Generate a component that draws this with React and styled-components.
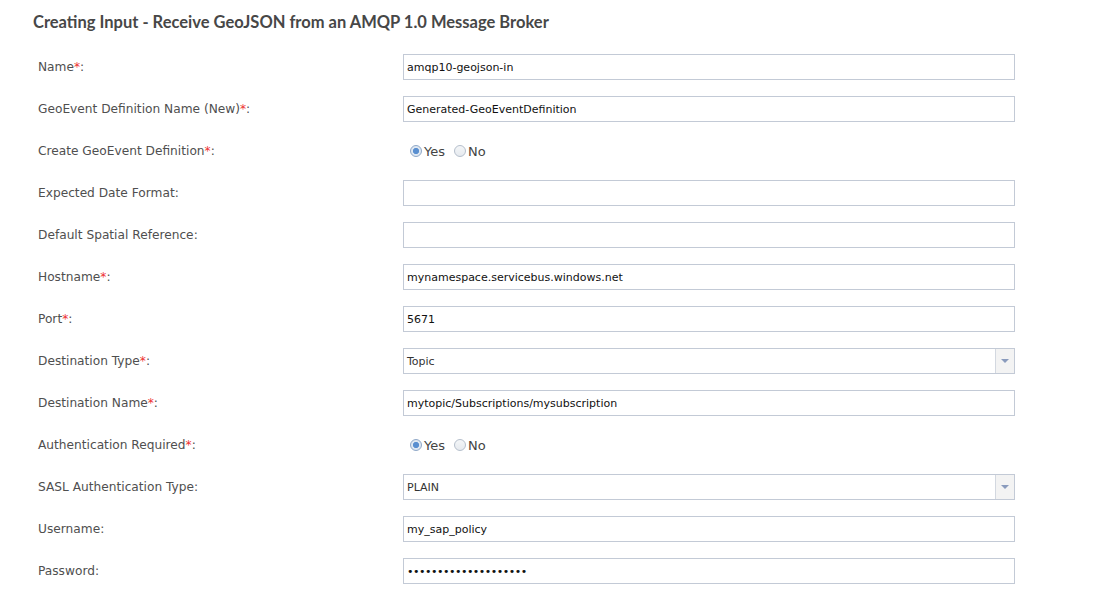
import React from "react";
import styled, { createGlobalStyle } from "styled-components";

const Global = createGlobalStyle`
  html, body { margin: 0; padding: 0; background: #fff; }
  body { font-family: "DejaVu Sans", Verdana, sans-serif; }
`;

const Page = styled.div`
  width: 1094px;
  height: 608px;
  padding: 12px 0 0 33px;
  box-sizing: border-box;
  overflow: hidden;
`;

const Title = styled.h2`
  margin: 0 0 14px 0;
  font-family: Lato, "Open Sans", sans-serif;
  font-weight: 700;
  font-size: 16.5px;
  line-height: 20px;
  color: #474747;
`;

const Form = styled.div`
  display: flex;
  flex-direction: column;
  padding-left: 5px;
`;

const Row = styled.div`
  display: grid;
  grid-template-columns: 365px 612px;
  align-items: center;
  height: 42px;
`;

const Label = styled.label`
  font-size: 12.2px;
  color: #4f4f4f;
`;

const Req = styled.span`
  color: #ee3333;
`;

const Input = styled.input`
  box-sizing: border-box;
  height: 26px;
  width: 100%;
  border: 1px solid #c3cad6;
  padding: 0 3px;
  font-family: "DejaVu Sans", Verdana, sans-serif;
  font-size: 11px;
  color: #111;
  outline: none;
  letter-spacing: ${(p) => (p.type === "password" ? "-0.5px" : "0")};
`;

const Select = styled.div`
  box-sizing: border-box;
  height: 26px;
  display: flex;
  border: 1px solid #c3cad6;
  font-size: 11px;
  color: #333;
`;

const SelectValue = styled.div`
  flex: 1;
  display: flex;
  align-items: center;
  padding-left: 3px;
`;

const SelectArrow = styled.div`
  width: 18px;
  border-left: 1px solid #d3d8e0;
  background: #f3f3f3;
  display: flex;
  align-items: center;
  justify-content: center;
  &::after {
    content: "";
    border-left: 4px solid transparent;
    border-right: 4px solid transparent;
    border-top: 4px solid #8a9bbd;
  }
`;

const Radios = styled.div`
  display: flex;
  align-items: center;
  gap: 9px;
  padding-left: 7px;
  font-size: 13px;
  color: #444;
`;

const RadioOpt = styled.span`
  display: inline-flex;
  align-items: center;
  gap: 2px;
`;

const Dot = styled.span`
  width: 12px;
  height: 12px;
  box-sizing: border-box;
  border-radius: 50%;
  border: 1px solid ${(p) => (p.checked ? "#8fa8c8" : "#b5bfcc")};
  background: ${(p) =>
    p.checked
      ? "radial-gradient(circle, #5a8fd0 0 2.8px, #dfe8f2 3.3px)"
      : "linear-gradient(#f4f6f8, #e6eaef)"};
`;

const fields = [
  { label: "Name", req: true, type: "text", value: "amqp10-geojson-in" },
  { label: "GeoEvent Definition Name (New)", req: true, type: "text", value: "Generated-GeoEventDefinition" },
  { label: "Create GeoEvent Definition", req: true, type: "radio" },
  { label: "Expected Date Format", type: "text", value: "" },
  { label: "Default Spatial Reference", type: "text", value: "" },
  { label: "Hostname", req: true, type: "text", value: "mynamespace.servicebus.windows.net" },
  { label: "Port", req: true, type: "text", value: "5671" },
  { label: "Destination Type", req: true, type: "select", value: "Topic" },
  { label: "Destination Name", req: true, type: "text", value: "mytopic/Subscriptions/mysubscription" },
  { label: "Authentication Required", req: true, type: "radio" },
  { label: "SASL Authentication Type", type: "select", value: "PLAIN" },
  { label: "Username", type: "text", value: "my_sap_policy" },
  { label: "Password", type: "password", value: "12345678901234567890" },
];

function Field({ f }) {
  if (f.type === "radio") {
    return (
      <Radios>
        <RadioOpt><Dot checked />Yes</RadioOpt>
        <RadioOpt><Dot />No</RadioOpt>
      </Radios>
    );
  }
  if (f.type === "select") {
    return (
      <Select>
        <SelectValue>{f.value}</SelectValue>
        <SelectArrow />
      </Select>
    );
  }
  return <Input type={f.type} defaultValue={f.value} readOnly />;
}

export default function App() {
  return (
    <Page>
      <Global />
      <Title>Creating Input - Receive GeoJSON from an AMQP 1.0 Message Broker</Title>
      <Form>
        {fields.map((f) => (
          <Row key={f.label}>
            <Label>
              {f.label}
              {f.req && <Req>*</Req>}:
            </Label>
            <Field f={f} />
          </Row>
        ))}
      </Form>
    </Page>
  );
}
